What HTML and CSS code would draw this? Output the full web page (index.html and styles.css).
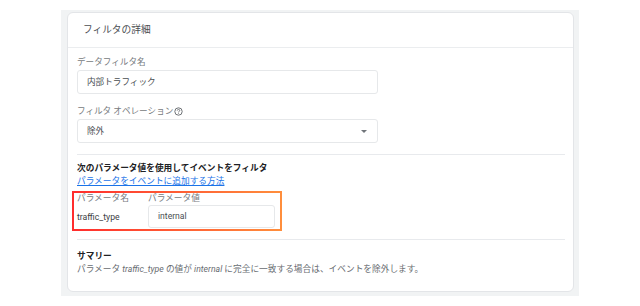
FILE: index.html
```html
<!DOCTYPE html>
<html lang="ja">
<head>
  <meta charset="UTF-8" />
  <title>フィルタの詳細</title>
  <link rel="stylesheet" href="styles.css">
</head>
<body>

  <div class="frame">
    <div class="card">
      <div class="card-head">フィルタの詳細</div>

      <div class="card-body">
        <div class="field">
          <div class="label">データフィルタ名</div>
          <div class="input">内部トラフィック</div>
        </div>

        <div class="field">
          <div class="label">フィルタ オペレーション<svg class="help" viewBox="0 0 10 10" width="9" height="9"><circle cx="5" cy="5" r="4.1" fill="none" stroke="#5f6368" stroke-width="1"/><path d="M3.6 4 Q3.6 2.7 5 2.7 Q6.4 2.7 6.4 3.9 Q6.4 4.7 5.3 5.1 L5 5.5 L5 6" fill="none" stroke="#5f6368" stroke-width="0.9"/><circle cx="5" cy="7.3" r="0.55" fill="#5f6368"/></svg></div>
          <div class="input select">除外<span class="arrow"></span></div>
        </div>

        <hr class="divider">

        <div class="title">次のパラメータ値を使用してイベントをフィルタ</div>
        <a class="link" href="#">パラメータをイベントに追加する方法</a>

        <!-- highlighted parameter table -->
        <div class="params">
          <div class="params-row head">
            <div class="col-name">パラメータ名</div>
            <div class="col-value">パラメータ値</div>
          </div>
          <div class="params-row">
            <div class="col-name">traffic_type</div>
            <div class="col-value"><div class="input small">internal</div></div>
          </div>
        </div>

        <hr class="divider last">

        <div class="title">サマリー</div>
        <div class="summary">パラメータ <i>traffic_type</i> の値が <i>internal</i> に完全に一致する場合は、イベントを除外します。</div>
      </div>
    </div>
  </div>

</body>
</html>
```

FILE: styles.css
```css
* {
  box-sizing: border-box;
}

body {
  margin: 0;
  background: #fff;
  font-family: 'Roboto', 'Noto Sans CJK JP', sans-serif;
  color: #3c4043;
}

.frame {
  margin: 10px 0 0 61px;
  width: 518px;
  height: 286px;
  background: #f1f3f4;
  padding: 2px 5px 4px 6px;
}

.card {
  height: 100%;
  background: #fff;
  border: 1px solid #e3e5e8;
  border-radius: 6px;
}

.card-head {
  height: 35px;
  line-height: 34px;
  padding-left: 15px;
  font-size: 9.7px;
  color: #4a4e52;
  border-bottom: 1px solid #ebedef;
}

.card-body {
  padding: 8px 8px 0 9px;
}

.field {
  margin-bottom: 11px;
}

.label {
  font-size: 8.6px;
  line-height: 12px;
  color: #777b80;
  margin-bottom: 2px;
  display: flex;
  align-items: center;
}

.help {
  margin-left: 1px;
}

.input {
  width: 301px;
  height: 24px;
  border: 1px solid #e6e8ea;
  border-radius: 3px;
  padding-left: 9px;
  font-size: 8.6px;
  line-height: 22px;
  color: #4a4e52;
}

.select {
  display: flex;
  justify-content: space-between;
  align-items: center;
  padding-right: 10px;
}

.arrow {
  width: 0;
  height: 0;
  border-left: 3px solid transparent;
  border-right: 3px solid transparent;
  border-top: 3px solid #70757a;
}

.divider {
  border: none;
  border-top: 1px solid #e8eaed;
  margin: 1px 0 7px 0;
}

.title {
  font-size: 8.7px;
  line-height: 13px;
  font-weight: 700;
  color: #202124;
}

.link {
  display: block;
  font-size: 8.7px;
  line-height: 13px;
  color: #1a73e8;
  text-decoration: underline;
}

.params {
  width: 210px;
  margin: 3px 0 0 -5px;
  padding: 0 5px 1px 3px;
  border: 2px solid;
  border-image: linear-gradient(to right, #ff2d2d, #ff8e3c) 1;
}

.params-row {
  display: flex;
  align-items: center;
  font-size: 8.7px;
  color: #3c4043;
}

.params-row.head {
  line-height: 11px;
  color: #777b80;
  margin-bottom: 1px;
}

.col-name {
  width: 71px;
}

.col-value {
  flex: 1;
}

.input.small {
  width: 127px;
  height: 23px;
  line-height: 21px;
}

.divider.last {
  margin-top: 8px;
  margin-bottom: 10px;
}

.summary {
  font-size: 8.7px;
  line-height: 13px;
  color: #686c71;
}
```
